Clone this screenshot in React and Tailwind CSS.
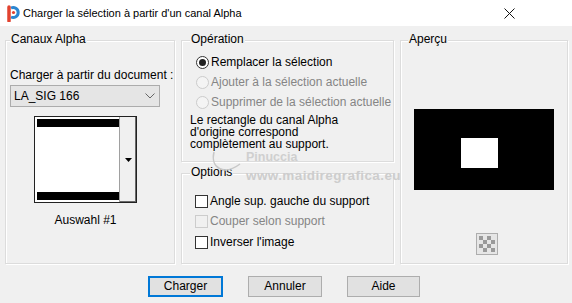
import React from 'react';

const font = { fontFamily: '"Liberation Sans", Arial, sans-serif' };

function GroupBox({ title, titleLeft, className = '', children }) {
  return (
    <div className={`relative border border-[#dcdcdc] shadow-[1px_1px_0_#ffffff,inset_1px_1px_0_#ffffff] ${className}`}>
      <span
        className="absolute top-[-9px] bg-[#f0f0f0] px-[1px] text-[12px] leading-[15px] text-black"
        style={{ left: titleLeft }}
      >
        {title}
      </span>
      {children}
    </div>
  );
}

function Radio({ checked, disabled, label }) {
  return (
    <div className="flex h-[20px] items-center gap-[2px]">
      <span
        className={`flex h-[13px] w-[13px] items-center justify-center rounded-full border ${
          disabled ? 'border-[#cccccc] bg-[#f4f4f4]' : 'border-[#333333] bg-white'
        }`}
      >
        {checked && <span className="h-[7px] w-[7px] rounded-full bg-[#222222]" />}
      </span>
      <span className={disabled ? 'text-[#858585]' : 'text-black'}>{label}</span>
    </div>
  );
}

function Check({ disabled, label }) {
  return (
    <div className="flex h-[20.5px] items-center gap-[2px]">
      <span
        className={`h-[13px] w-[13px] border ${
          disabled ? 'border-[#cccccc] bg-[#f0f0f0]' : 'border-[#333333] bg-white'
        }`}
      />
      <span className={disabled ? 'text-[#858585]' : 'text-black'}>{label}</span>
    </div>
  );
}

function Checker() {
  const cells = [];
  for (let r = 0; r < 4; r++)
    for (let c = 0; c < 4; c++)
      cells.push(
        <rect key={`${r}-${c}`} x={c * 4} y={r * 4} width="4" height="4" fill={(r + c) % 2 ? '#e6e6e6' : '#9a9a9a'} />,
      );
  return (
    <svg width="16" height="16" viewBox="0 0 16 16">
      {cells}
    </svg>
  );
}

export default function App() {
  return (
    <div className="h-[303px] w-[572px] overflow-hidden bg-[#f0f0f0] text-[12px] leading-[15px]" style={font}>
      {/* Title bar */}
      <div className="flex h-[26px] items-center bg-white">
        <svg width="16" height="18" viewBox="0 0 16 18" className="ml-[5px]">
          <path d="M6 4 A5 5 0 1 1 6 13" fill="none" stroke="#2b86d1" strokeWidth="3" />
          <path d="M4 3 L4 17" stroke="#e2422f" strokeWidth="3.5" strokeLinecap="round" />
          <circle cx="8.5" cy="8.5" r="1.6" fill="#e2422f" />
        </svg>
        <span className="ml-[2px] text-[11px] text-black">Charger la sélection à partir d'un canal Alpha</span>
        <svg width="11" height="11" viewBox="0 0 11 11" className="ml-auto mr-[57px]">
          <path d="M0.5 0.5 L10.5 10.5 M10.5 0.5 L0.5 10.5" stroke="#111" strokeWidth="1" />
        </svg>
      </div>

      {/* Panels */}
      <div className="relative flex pl-[5px] pt-[14px]">
        <GroupBox title="Canaux Alpha" titleLeft={4} className="h-[224px] w-[170px]">
          <div className="flex flex-col pl-[4px] pt-[27px]">
            <span>Charger à partir du document :</span>
            <div className="mt-[2px] flex h-[22px] w-[150px] items-center justify-between border border-[#acacac] bg-[#e5e5e5] pl-[3px] pr-[4px]">
              <span>LA_SIG 166</span>
              <svg width="10" height="6" viewBox="0 0 10 6">
                <path d="M0.5 0.5 L5 5 L9.5 0.5" fill="none" stroke="#666" strokeWidth="1" />
              </svg>
            </div>
            <div className="ml-[24px] mt-[9px] flex w-[103px] flex-col items-center">
              <div className="flex h-[87px] w-[103px] border border-[#222222] bg-white">
                <div className="flex flex-1 flex-col justify-between py-[2px] pl-[2px]">
                  <div className="h-[8px] bg-black" />
                  <div className="h-[8px] bg-black" />
                </div>
                <div className="flex w-[17px] items-center justify-center border-l border-[#a0a0a0] bg-[#f0f0f0] shadow-[inset_-1px_-1px_0_#696969]">
                  <svg width="7" height="4" viewBox="0 0 7 4">
                    <path d="M0 0 L7 0 L3.5 4 Z" fill="#000" />
                  </svg>
                </div>
              </div>
              <span className="mt-[10px]">Auswahl #1</span>
            </div>
          </div>
        </GroupBox>

        <div className="ml-[6px] flex w-[213px] flex-col">
          <GroupBox title="Opération" titleLeft={8} className="h-[122px]">
            <div className="flex flex-col pl-[14px] pt-[11px]">
              <Radio checked label="Remplacer la sélection" />
              <Radio disabled label="Ajouter à la sélection actuelle" />
              <Radio disabled label="Supprimer de la sélection actuelle" />
            </div>
            <p className="mt-[2px] pl-[8px] leading-[12px]">
              Le rectangle du canal Alpha
              <br />
              d'origine correspond
              <br />
              complètement au support.
            </p>
          </GroupBox>
          <GroupBox title="Options" titleLeft={8} className="mt-[11px] h-[91px]">
            <div className="flex flex-col pl-[13px] pt-[17px]">
              <Check label="Angle sup. gauche du support" />
              <Check disabled label="Couper selon support" />
              <Check label="Inverser l'image" />
            </div>
          </GroupBox>
        </div>

        <GroupBox title="Aperçu" titleLeft={7} className="ml-[6px] h-[224px] w-[168px]">
          <div className="flex flex-col items-center pt-[68px]">
            <div className="h-[81px] w-[140px] bg-black pl-[47px] pt-[29px]">
              <div className="h-[30px] w-[37px] bg-white" />
            </div>
            <div className="ml-[6px] mt-[43px] flex h-[22px] w-[22px] items-center justify-center border border-[#adadad] bg-[#e6e6e6]">
              <Checker />
            </div>
          </div>
        </GroupBox>

        {/* Watermark */}
        <div className="pointer-events-none absolute left-[208px] top-[124px] select-none">
          <svg width="40" height="34" viewBox="0 0 40 34" className="absolute left-0 top-0">
            <path d="M6 2 C 2 18, 16 26, 32 14" fill="none" stroke="#c8c8c8" strokeWidth="1.5" />
          </svg>
          <span className="absolute left-[38px] top-[0px] text-[12.5px] font-bold leading-[15px] text-[#cfcfcf]">Pinuccia</span>
          <span className="absolute left-[38px] top-[18px] whitespace-nowrap text-[13.5px] font-bold leading-[16px] tracking-[0.4px] text-[#cdcdcd]">
            www.maidiregrafica.eu
          </span>
        </div>
      </div>

      {/* Buttons */}
      <div className="mt-[12px] flex gap-[25px] pl-[148px]">
        <button className="h-[21px] w-[75px] border-2 border-[#0078d7] bg-[#e1e1e1] text-black">Charger</button>
        <button className="h-[21px] w-[74px] border border-[#adadad] bg-[#e1e1e1] text-black">Annuler</button>
        <button className="h-[21px] w-[73px] border border-[#adadad] bg-[#e1e1e1] text-black">Aide</button>
      </div>
    </div>
  );
}
